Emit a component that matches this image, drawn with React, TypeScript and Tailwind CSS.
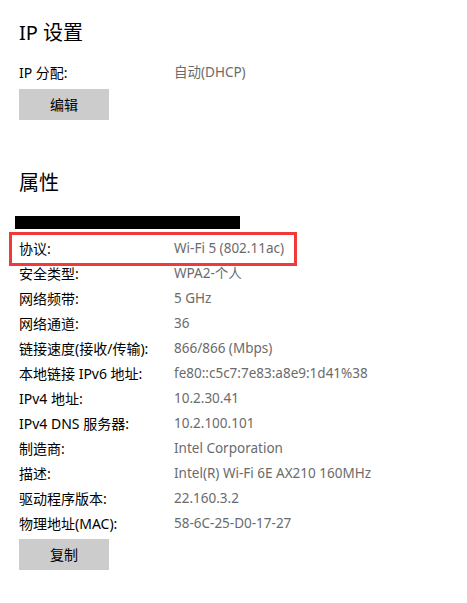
import React from 'react';

const rows: [string, string][] = [
  ['安全类型:', 'WPA2-个人'],
  ['网络频带:', '5 GHz'],
  ['网络通道:', '36'],
  ['链接速度(接收/传输):', '866/866 (Mbps)'],
  ['本地链接 IPv6 地址:', 'fe80::c5c7:7e83:a8e9:1d41%38'],
  ['IPv4 地址:', '10.2.30.41'],
  ['IPv4 DNS 服务器:', '10.2.100.101'],
  ['制造商:', 'Intel Corporation'],
  ['描述:', 'Intel(R) Wi-Fi 6E AX210 160MHz'],
  ['驱动程序版本:', '22.160.3.2'],
  ['物理地址(MAC):', '58-6C-25-D0-17-27'],
];

const Row = ({ label, value }: { label: string; value: string }) => (
  <div className="flex h-[25px] items-center">
    <span className="w-[155px] shrink-0 text-[14px] text-black">{label}</span>
    <span className="text-[13.5px] text-[#6b6b6b]">{value}</span>
  </div>
);

const Button = ({ children }: { children: React.ReactNode }) => (
  <button className="flex h-[31px] w-[90px] items-center justify-center bg-[#cccccc] text-[14px] text-black">
    {children}
  </button>
);

const App = () => {
  return (
    <div
      className="flex min-h-screen w-[467px] flex-col items-start bg-white pl-[19px] pt-[19px] antialiased"
      style={{ fontFamily: '"Segoe UI", "Noto Sans", "Noto Sans CJK SC", sans-serif' }}
    >
      <h2 className="h-[28px] text-[20px] leading-[28px] text-black">IP 设置</h2>
      <div className="mt-[13px]">
        <Row label="IP 分配:" value="自动(DHCP)" />
      </div>
      <div className="mt-[4px]">
        <Button>编辑</Button>
      </div>

      <h2 className="mt-[49px] h-[28px] text-[20px] leading-[28px] text-black">属性</h2>
      <div className="ml-[-4px] mt-[19px] h-[13px] w-[225px] bg-black"></div>

      <div className="mt-[7px] flex flex-col">
        <div className="relative">
          <Row label="协议:" value="Wi-Fi 5 (802.11ac)" />
          {/* annotation box */}
          <div className="absolute left-[-10px] top-[-4px] h-[34px] w-[288px] border-[3px] border-[#f03a3a]"></div>
        </div>
        {rows.map(([l, v]) => (
          <Row key={l} label={l} value={v} />
        ))}
      </div>

      <div className="mt-[3px]">
        <Button>复制</Button>
      </div>
    </div>
  );
};

export default App;
